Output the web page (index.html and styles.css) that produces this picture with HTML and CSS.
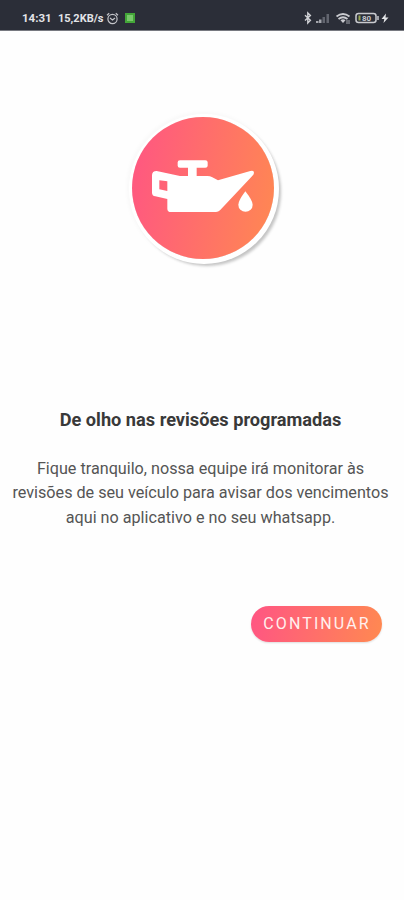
FILE: index.html
```html
<!DOCTYPE html>
<html lang="pt-BR">
<head>
    <meta charset="UTF-8">
    <meta name="viewport" content="width=device-width, initial-scale=1.0">
    <title>Revisões programadas</title>
    <link rel="stylesheet" href="styles.css">
</head>
<body>
    <header class="status-bar">
        <div class="status-left">
            <span class="hora">14:31</span>
            <span class="rede">15,2KB/s</span>
            <svg class="alarme" width="13" height="13" viewBox="0 0 13 13" fill="none" stroke="#c4c5ca">
                <circle cx="6.5" cy="7" r="4.6" stroke-width="1.2"/>
                <path d="M1 3.2L3.2 1.2M12 3.2L9.8 1.2M4 6l2.5 2L9 6" stroke-width="1.2"/>
            </svg>
            <span class="app"></span>
        </div>
        <svg class="status-icons" width="86" height="14" viewBox="0 0 86 14" fill="none">
            <path d="M2 4.2l5.4 5L4.8 12V2l2.6 2.6L2 9.6" stroke="#d0d1d5" stroke-width="1.4"/>
            <path d="M13 12v-2h2.500v2zM16 12V8.500h2.500V12z" fill="#a4a6ad"/>
            <path d="M19.500 12V6H22v6zM23.500 12V3H26v9z" fill="#62656f"/>
            <path d="M33.500 5.500q6.500-5 13 0M35.500 8q4.500-3.500 9 0" stroke="#c9cacf" stroke-width="1.800"/>
            <path d="M37.500 9.200q2.500-1.800 5 0L40 12z" fill="#c9cacf"/>
            <path d="M44 9v4M46 9v4" stroke="#a4a6ad"/>
            <rect x="53" y="2.500" width="20" height="9" rx="2.500" stroke="#c9cacf" stroke-width="1.500"/>
            <path d="M55.500 4.500h2v5h-2z" fill="#98a653"/>
            <text x="59" y="10" class="bateria">80</text>
            <path d="M75 5v4" stroke="#c9cacf" stroke-width="1.500"/>
            <path d="M83 2.500L78.500 8h2.800L80.500 12 85.500 6.500h-3z" fill="#e3e4e7"/>
        </svg>
    </header>

    <main class="container">
        <div class="circulo">
            <svg width="142" height="142" viewBox="36 36 426 426" fill="#fff">
                <path fill-rule="evenodd" d="M180 166H256Q263 166 263 172V182Q263 188 256 188H230V213H262Q270 213 277 217L294 226L391 198Q402 195 402 203Q402 208 396 214L300 316Q295 321 288 321H153Q142 321 142 311V282L106 274Q96 272 96 263V211Q96 198 110 198L180 213H204V188H180Q173 188 173 182V172Q173 166 180 166ZM118 226V253L142 258V229Z"/>
                <path d="M376 259Q398 287 398 299A21.500 21.500 0 0 1 355 299Q355 287 376 259Z"/>
            </svg>
        </div>
        <h1>De olho nas revisões programadas</h1>
        <p>Fique tranquilo, nossa equipe irá monitorar às<br>revisões de seu veículo para avisar dos vencimentos<br>aqui no aplicativo e no seu whatsapp.</p>
        <button type="button" class="continuar">CONTINUAR</button>
    </main>
</body>
</html>
```

FILE: styles.css
```css
body {
    font-family: Roboto, sans-serif;
    background: #fefefe;
    margin: 0;
    min-height: 100vh;
}
.status-bar {
    box-sizing: border-box;
    display: flex;
    justify-content: space-between;
    align-items: center;
    height: 31px;
    padding: 6px 15px 0 22px;
    background: #2b2e38;
    border-bottom: 1px solid #777980;
    color: #e3e4e7;
}
.status-left {
    display: flex;
    align-items: center;
}
.hora {
    width: 36px;
    font-size: 11.5px;
    font-weight: 700;
}
.rede {
    width: 48px;
    font-size: 11px;
    font-weight: 700;
    white-space: nowrap;
}
.app {
    box-sizing: border-box;
    width: 10px;
    height: 10px;
    margin-left: 6px;
    background: #79c96b;
    border: 2px solid #43a638;
}
.bateria {
    font-size: 8px;
    font-weight: 700;
    fill: #c9cacf;
}
.container {
    display: flex;
    flex-direction: column;
    align-items: center;
    padding-top: 86px;
}
.circulo {
    width: 142px;
    height: 142px;
    margin-left: 2px;
    border-radius: 50%;
    background: linear-gradient(100deg, #ff5583, #ff8951);
    box-shadow: 1px 1px 0 4px #fff, 4px 4px 3px 3px #c4c4c4, 0 0 5px 4px #f6f6f6;
}
.circulo svg {
    display: block;
}
h1 {
    margin: 149px 3px 0 0;
    font-size: 18.2px;
    font-weight: 700;
    line-height: 24px;
    color: #393939;
    white-space: nowrap;
}
p {
    margin: 25px 3px 0 0;
    font-size: 16.18px;
    line-height: 24.4px;
    text-align: center;
    color: #555;
    white-space: nowrap;
}
.continuar {
    align-self: flex-end;
    width: 131px;
    height: 36px;
    margin: 76px 22px 0 0;
    padding: 0 0 2px 1px;
    border: none;
    border-radius: 18px;
    background: linear-gradient(100deg, #ff5583, #ff8951);
    box-shadow: 0 1px 2px #ddd;
    color: #fff0ee;
    font-family: Roboto, sans-serif;
    font-size: 16px;
    letter-spacing: 2.1px;
    cursor: pointer;
}
```
